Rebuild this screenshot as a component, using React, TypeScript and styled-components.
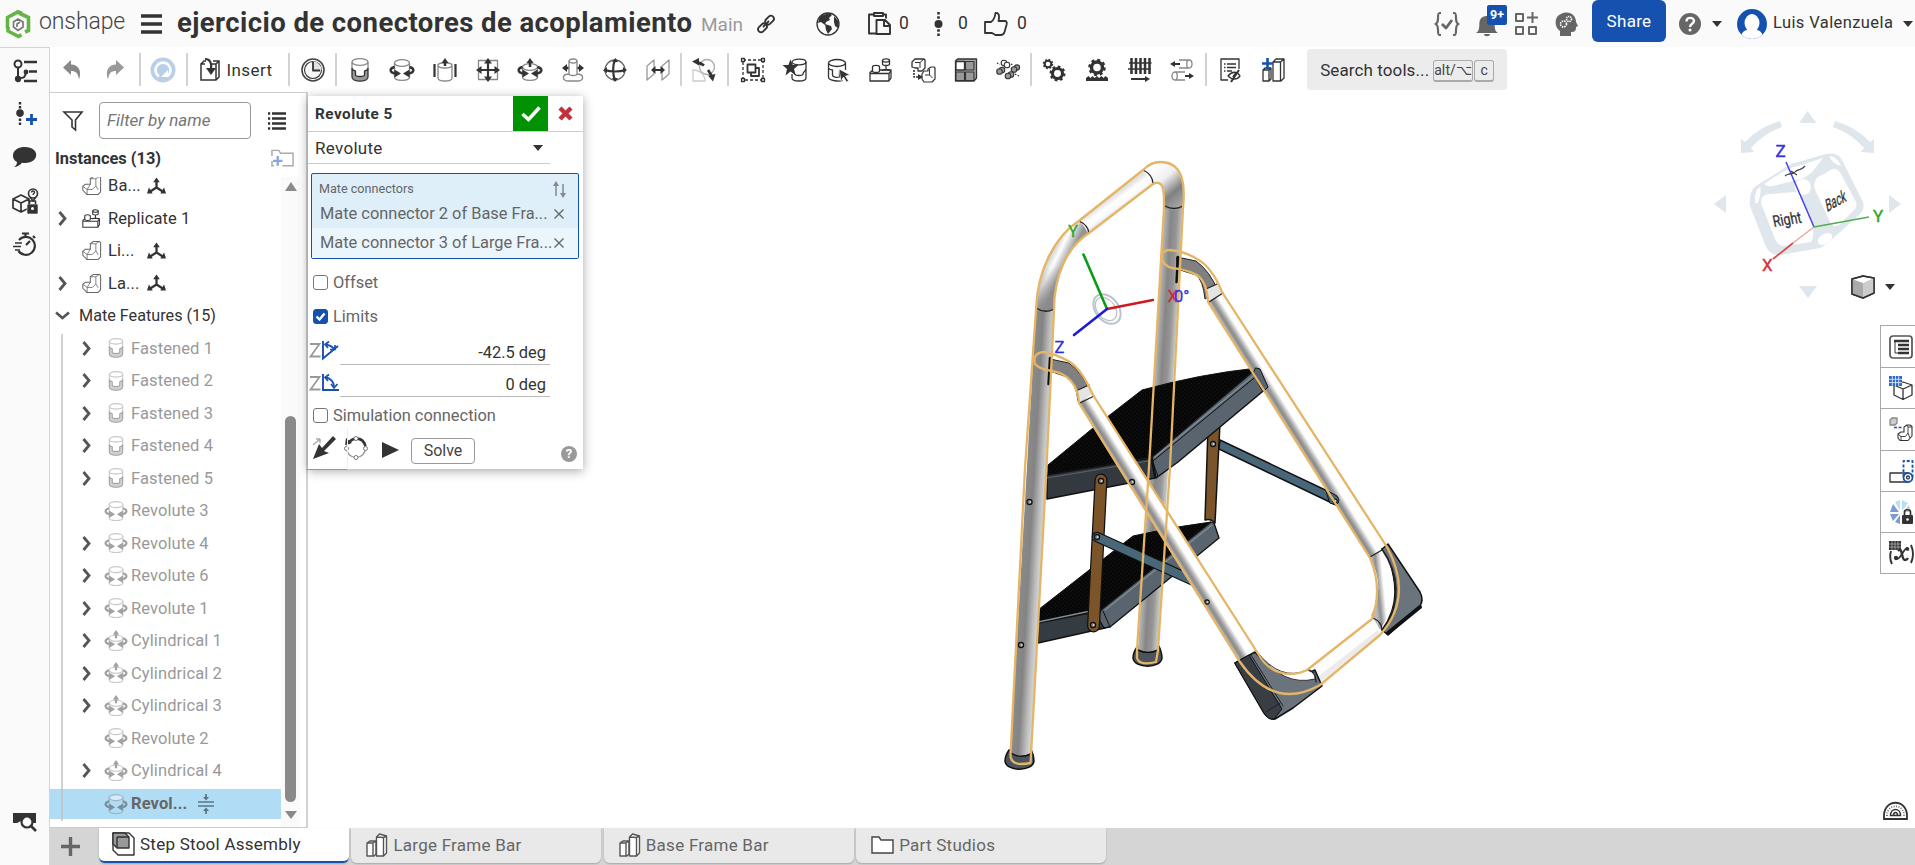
import React from 'react';
import styled, { createGlobalStyle } from 'styled-components';

const Global = createGlobalStyle`
  * { box-sizing: border-box; }
  body { margin: 0; overflow: hidden; background: #fff; color: #333; font: 16.5px Roboto, "Liberation Sans", sans-serif; }
  svg { display: block; flex: none; overflow: visible; }
`;

const Page = styled.div`
  width: 1915px; height: 865px; display: flex; flex-direction: column; background: #fff;
`;
const Header = styled.header`
  height: 47px; flex: none; display: flex; align-items: center; background: #fafafa; padding: 0 2px 0 5px;
`;
const Slot = styled.div<{ $ml?: number; $w?: number }>`
  flex: none; position: relative; display: flex; align-items: center; white-space: nowrap;
  margin-left: ${p => p.$ml ?? 0}px; width: ${p => (p.$w ? p.$w + 'px' : 'auto')};
`;
const Brand = styled.span`font: 300 23px Roboto, sans-serif; letter-spacing: -0.1px; color: #444; transform: translateY(-2px);`;
const Title = styled.h1`margin: 0; font: 700 27.5px Roboto, sans-serif; letter-spacing: 0.42px; color: #333; transform: translateY(-1px);`;
const Branch = styled.span`font-size: 19px; color: #999; transform: translateY(1px);`;
const Count = styled.span`font-size: 17.5px; transform: translateY(-1px);`;
const RightGroup = styled.div`margin-left: auto; display: flex; align-items: center; height: 47px;`;
const Badge = styled.span`
  position: absolute; left: 12px; top: -7px; width: 20px; height: 20px; border-radius: 2px; background: #1651b0;
  color: #fff; font: 700 12.5px/19px Roboto, sans-serif; text-align: center;
`;
const Share = styled.button`
  width: 74px; height: 42px; align-self: flex-start; margin: 0 0 0 14px; padding: 0 0 1px; border: 0; border-radius: 6px;
  background: #1651b0; color: #fff; font: 17px Roboto, sans-serif; letter-spacing: 0.3px;
`;
const UserName = styled.span`font-size: 16.5px; letter-spacing: 0.4px; transform: translateY(-1px);`;
const Body = styled.div`flex: 1; display: flex; min-height: 0;`;
const Rail = styled.nav`
  width: 50px; flex: none; background: #fafafa; border-right: 1px solid #d5d5d5; border-top: 1px solid #d5d5d5;
  display: flex; flex-direction: column; align-items: center;
`;
const RailItem = styled.div<{ $h: number; $mt?: number }>`
  height: ${p => p.$h}px; margin-top: ${p => p.$mt ?? 0}px; display: flex; align-items: center; justify-content: center;
`;
const Work = styled.div`flex: 1; display: flex; flex-direction: column; min-width: 0;`;
const Toolbar = styled.div`height: 45px; flex: none; display: flex; align-items: center;`;
const Tool = styled.div<{ $w?: number }>`
  width: ${p => p.$w ?? 42.6}px; height: 45px; flex: none; display: flex; align-items: center; justify-content: center;
`;
const InsertTool = styled(Tool)`justify-content: flex-start; padding-left: 11px; gap: 7px; font-size: 17px; letter-spacing: 0.4px;`;
const Sep = styled.div<{ $w: number }>`
  width: ${p => p.$w}px; flex: none; display: flex; justify-content: center;
  &::before { content: ''; width: 2px; height: 33px; background: #d2d2d2; }
`;
const SearchBox = styled.div`
  width: 200px; height: 41px; margin: 0 0 0 13px; padding: 0 12px 0 13px; border-radius: 4px; background: #ececec;
  display: flex; align-items: center; font-size: 17px; white-space: nowrap; letter-spacing: 0.1px;
`;
const Key = styled.kbd<{ $w: number }>`
  width: ${p => p.$w}px; height: 22px; margin-right: 1px; border: 1px solid #aaa; border-bottom-width: 2px; border-radius: 3px;
  font: 14px/18px Roboto, "DejaVu Sans", sans-serif; text-align: center; color: #444;
`;
const KeyGroup = styled.div`margin-left: auto; display: flex; padding-top: 2px;`;
const Middle = styled.div`flex: 1; display: flex; position: relative; min-height: 0;`;
const Panel = styled.aside`
  width: 258px; flex: none; border-top: 1px solid #ccc; border-right: 2px solid #d2d2d2; border-bottom: 1px solid #ccc;
  display: flex; flex-direction: column;
`;
const FilterRow = styled.div`display: flex; align-items: center; height: 37px; margin-top: 9px; padding: 0 20px 0 13px;`;
const FilterInput = styled.div`
  width: 152px; height: 37px; margin: 0 auto 0 16px; border: 1px solid #999; border-radius: 4px; padding-left: 7px;
  font: italic 17px/35px Roboto, sans-serif; color: #757575;
`;
const ListHead = styled.div`
  height: 38px; display: flex; align-items: center; justify-content: space-between; padding: 0 12px 0 5px;
  font-weight: 700; font-size: 16.4px;
`;
const TreeArea = styled.div`flex: 1; display: flex; min-height: 0;`;
const Tree = styled.div`width: 231px; overflow: hidden;`;
const TreeRows = styled.div`
  margin-top: -8px; padding-top: 0.5px; position: relative; letter-spacing: 0.1px;
`;
const TreeLine = styled.div`position: absolute; left: 11px; top: 165px; width: 2px; height: 487px; background: #d2d2d2;`;
const Row = styled.div<{ $level: number; $muted?: boolean; $sel?: boolean }>`
  height: 32.5px; display: flex; align-items: center; white-space: nowrap; position: relative;
  padding-left: ${p => (p.$level === 0 ? 5 : p.$level === 1 ? 8 : 32)}px;
  color: ${p => (p.$muted ? '#999' : '#333')};
  ${p => p.$level === 0 && 'font-size: 16.2px; letter-spacing: 0;'}
  ${p => p.$sel && `
    color: #666; font-weight: 700; height: 30px; margin-top: 1.5px;
    background: linear-gradient(90deg, transparent 11px, #bcc8ce 11px, #bcc8ce 13px, transparent 13px) #b1dcf5;
  `}
`;
const ChevronBox = styled.span`width: 24px; display: flex;`;
const IconBox = styled.span<{ $w: number; $muted?: boolean }>`
  width: ${p => p.$w}px; display: flex; opacity: ${p => (p.$muted ? 0.45 : 1)};
`;
const ScrollTrack = styled.div`width: 19px; background: #fafafa; display: flex; flex-direction: column; align-items: center; padding: 5px 0;`;
const Thumb = styled.div`width: 11px; height: 386px; margin-top: 225px; margin-bottom: 9px; border-radius: 6px; background: #8a8a8a;`;
const Tri = styled.div<{ $down?: boolean; $color?: string; $s?: number }>`
  width: 0; height: 0; border: ${p => p.$s ?? 6}px solid transparent;
  ${p => p.$down
    ? `border-top: ${(p.$s ?? 6) * 1.35}px solid ${p.$color ?? '#8a8a8a'}; border-bottom: 0;`
    : `border-bottom: ${(p.$s ?? 6) * 1.5}px solid ${p.$color ?? '#8a8a8a'}; border-top: 0;`}
`;
const Canvas = styled.main`flex: 1; position: relative;`;
const Scene = styled.svg`position: absolute; left: 0; top: 0; font-family: Roboto, sans-serif;`;
const SidePanel = styled.div`
  position: absolute; right: 0; top: 233px; width: 35px; border: 1px solid #a8a8a8; border-right: 0; background: #fff;
`;
const SideItem = styled.div`
  height: 41.2px; display: flex; align-items: center; padding-left: 8px;
  & + & { border-top: 1px solid #a8a8a8; }
`;
const ViewMenu = styled.div`position: absolute; right: 20px; top: 183px; display: flex; align-items: center; gap: 10px;`;
const Protractor = styled.div`position: absolute; right: 7px; top: 710px;`;

const Dialog = styled.section`
  position: absolute; left: 258px; top: 4px; width: 275px; height: 373px; background: #fff; box-shadow: 0 2px 10px rgba(0,0,0,0.35);
  color: #666; display: flex; flex-direction: column;
`;
const DialogHead = styled.div`
  height: 36px; flex: none; border-bottom: 1px solid #ccc; display: flex; align-items: center; padding-left: 7px;
  font-weight: 700; font-size: 15.3px; letter-spacing: 0.5px; color: #333;
`;
const Accept = styled.div`width: 35px; height: 35px; margin-left: auto; background: #009203; display: flex; align-items: center; justify-content: center;`;
const Cancel = styled.div`width: 35px; display: flex; justify-content: center;`;
const SelectRow = styled.div`
  width: 242px; height: 32px; flex: none; border-bottom: 1px solid #ccc; display: flex; align-items: center; justify-content: space-between;
  padding: 0 7px; font-size: 17px; letter-spacing: 0.3px; color: #333;
`;
const Selection = styled.div`
  margin: 9px 0 0 3px; width: 268px; height: 86px; flex: none; border: 1px solid #1651b0; border-radius: 2px; background: #deeff9;
`;
const SelLabel = styled.div`height: 26px; padding: 7px 12px 0 7px; font-size: 12.6px; display: flex; justify-content: space-between;`;
const SelItem = styled.div<{ $light?: boolean }>`
  height: ${p => (p.$light ? 30 : 28)}px; padding: 0 14px 1px 8px; display: flex; align-items: center; justify-content: space-between;
  font-size: 16.4px; white-space: nowrap; background: ${p => (p.$light ? '#ebf5fc' : 'transparent')};
`;
const CheckRow = styled.div<{ $mt: number }>`
  height: 18px; margin-top: ${p => p.$mt}px; padding-left: 5px; display: flex; align-items: center; gap: 5px; font-size: 16.4px;
`;
const Check = styled.span<{ $on?: boolean }>`
  width: 15px; height: 15px; border-radius: 3px; border: 1px solid ${p => (p.$on ? '#1651b0' : '#777')};
  background: ${p => (p.$on ? '#1651b0' : '#fff')}; display: flex; align-items: center; justify-content: center;
`;
const ValueRow = styled.div<{ $h: number }>`height: ${p => p.$h}px; display: flex; width: 242px;`;
const Value = styled.div`
  margin-left: auto; width: 210px; border-bottom: 1px solid #bbb; display: flex; align-items: flex-end; justify-content: flex-end;
  padding: 0 4px 2px; color: #333; font-size: 16.4px;
`;
const ValueIcon = styled.div<{ $pt: number }>`padding: ${p => p.$pt}px 0 0 1px;`;
const DialogFoot = styled.div`
  flex: 1; display: flex; align-items: center; padding: 4px 6px 0 5px; margin-top: 4px;
`;
const FootIcon = styled.div<{ $ml?: number; $up?: number }>`margin-left: ${p => p.$ml ?? 0}px; padding-bottom: ${p => p.$up ?? 0}px;`;
const Solve = styled.button`
  width: 64px; height: 26px; margin-left: 12px; border: 1px solid #999; border-radius: 4px; background: #fff; color: #444;
  font: 16px/20px Roboto, sans-serif; padding: 0;
`;
const HelpDot = styled.div`
  width: 16px; height: 16px; margin: 6px 0 0 auto; border-radius: 50%; background: #999; color: #fff; font: 700 13px/16px Roboto, sans-serif;
  text-align: center;
`;
const GhostCorner = styled.div`
  position: absolute; left: -2px; top: 332px; width: 42px; height: 42px; border-bottom: 1px solid #999; border-right: 1px solid #eee;
`;

const TabBar = styled.footer`height: 37px; flex: none; display: flex; background: #d5d5d5; margin-left: -1px;`;
const AddTab = styled.div`width: 50px; display: flex; align-items: center; justify-content: center; padding-right: 7px;`;
const Tab = styled.div<{ $active?: boolean; $gap: number }>`
  width: 250px; height: 35px; margin-right: 2.4px; padding: 0 0 1px ${p => (p.$active ? 13 : 15)}px;
  display: flex; align-items: center; gap: ${p => p.$gap}px; border-radius: 0 0 6px 6px; white-space: nowrap;
  background: ${p => (p.$active ? '#fff' : '#e9e9e9')}; color: ${p => (p.$active ? '#333' : '#666')};
  border-bottom: ${p => (p.$active ? '2px solid #1651b0' : '0')}; box-shadow: 0 1px 2px rgba(0,0,0,0.22);
  font-size: 17px; letter-spacing: 0.25px;
`;

const D = '#333';

const Icon = ({ s = 24, children, w }: { s?: number; w?: number; children: React.ReactNode }) => (
  <svg width={w ?? s} height={s} viewBox={`0 0 ${w ?? 24} 24`} fill="none" stroke={D} strokeWidth="1.3" strokeLinejoin="round">{children}</svg>
);

const Can = ({ top = 4, bottom = 19 }: { top?: number; bottom?: number }) => (
  <g stroke="#888"><ellipse cx="12" cy={top} rx="7.500" ry="3.300" fill="#fff" /><path d={`M4.500 ${top}V${bottom}c0 4.500 15 4.500 15 0V${top}`} /></g>
);
const TurnArrows = () => (
  <g><path d="M4.500 9C-1 10.500-.5 14.500 5 15.500M19.500 9c5.500 1.500 5 5.500-.5 6.500" strokeWidth="2.400" />
    <path d="M4.500 11.500l6.500 4-6.500 4zM19.500 11.500l-6.500 4 6.500 4z" fill={D} stroke="none" /></g>
);
const FastenedIcon = ({ s = 24 }: { s?: number }) => (
  <Icon s={s}><ellipse cx="12" cy="4" rx="8" ry="3.300" stroke="#888" /><path d="M4 4v7M20 4v7" stroke="#888" />
    <path d="M4 10.500V19c0 5.500 16 5.500 16 0v-8.500c-1 1.800-2.500 2.500-3.500 2.500v4c0 2-9 2-9 0v-4c-1 0-2.500-.7-3.500-2.500z" fill="#999" /></Icon>
);
const RevoluteIcon = ({ s = 24 }: { s?: number }) => <Icon s={s}><Can top={5} /><TurnArrows /></Icon>;
const CylIcon = ({ s = 24 }: { s?: number }) => (
  <Icon s={s}><Can top={9} bottom={19} /><TurnArrows /><path d="M12 9V4" strokeWidth="2.500" /><path d="M8.500 5L12 0l3.500 5z" fill={D} stroke="none" /></Icon>
);
const PartIcon = ({ s = 24 }: { s?: number }) => (
  <Icon s={s}><g stroke="#666"><path d="M1 13l3-2.500h6.500V3.500l4-3h7.500l1.500 1.500v18L20 23.500H6.500L1 18z" fill="#fff" /><path d="M1 13l5.500 4v6M6.500 17H13l4.500-4.500V3.500L22 .5M10.500 3.500h7M10.500 10.500l-4 6.500M17.500 12.500l3 5" strokeWidth="1" /></g></Icon>
);
const ReplicateIcon = ({ s = 24 }: { s?: number }) => (
  <Icon s={s}><path d="M1 14.500l3-2.500h18v8l-2 3H1zM1 15.500h19v7M20 15.500l2-3" />
    <ellipse cx="7" cy="9" rx="3.500" ry="1.600" fill="#fff" /><path d="M3.500 9v4c0 2 7 2 7 0V9" fill="#fff" />
    <ellipse cx="17" cy="2.500" rx="3.500" ry="1.600" /><path d="M13.500 2.500v3.500c0 2 7 2 7 0V2.500M17 8v4M13.500 13c0-2 7-2 7 0" /></Icon>
);
const MateIcon = () => (
  <svg width="19" height="18" viewBox="0 0 20 18" fill={D}><path d="M10 3v8M10 10.500L3 15M10 10.500L17 15" stroke={D} strokeWidth="2.400" /><path d="M6.500 5L10 0l3.500 5zM0 17l2-6.500 4 6.500zM20 17l-2-6.500-4 6.500z" /></svg>
);
const PartStudio = ({ c = '#555' }: { c?: string }) => (
  <svg width="22" height="24" viewBox="0 0 22 24" fill="#fff" stroke={c} strokeWidth="1.400" strokeLinejoin="round">
    <path d="M1 10l3-2h6v13l-2 2H1zM1 10h6v13M7 10l3-2" /><path d="M10.500 4l3-3 7 2v17l-3 3h-7zM10.500 4l7 .5V23M17.500 4.500l3-1.500" /></svg>
);
const Chevron = ({ down }: { down?: boolean }) => down
  ? <svg width="15" height="9" viewBox="0 0 15 9" fill="none" stroke="#555" strokeWidth="2.600"><path d="M1 1.500L7.500 7 14 1.500" /></svg>
  : <svg width="9" height="15" viewBox="0 0 9 15" fill="none" stroke="#555" strokeWidth="2.800"><path d="M1.500 1l5.500 6.500L1.500 14" /></svg>;
const gear = (cx: number, cy: number, r: number) => (
  <g><circle cx={cx} cy={cy} r={r} fill="none" stroke={D} strokeWidth={r * 0.62} />
    <circle cx={cx} cy={cy} r={r * 1.35} fill="none" stroke={D} strokeWidth={r * 0.5} strokeDasharray={`${r * 0.53} ${r * 0.53}`} /></g>
);

const mateTools: React.ReactNode[] = [
  <FastenedIcon />,
  <RevoluteIcon />,
  <Icon><path d="M5 7v13c0 4 14 4 14 0V7c-1-3-13-3-14 0zM5 7c0 4 14 4 14 0" stroke="#888" /><path d="M12 8V4" strokeWidth="2.500" /><path d="M8.500 5L12 0l3.500 5z" fill={D} stroke="none" /><path d="M1.500 6v13M22.500 6v13" strokeWidth="2.200" /></Icon>,
  <Icon><path d="M2.500 2.500h19v19h-19z" stroke="#888" /><path d="M12 4v16M4 12h16" strokeWidth="2.200" /><path d="M8 5.500L12 0l4 5.500zM8 18.500l4 5.500 4-5.500zM5.500 8L0 12l5.500 4zM18.500 8l5.500 4-5.500 4z" fill={D} stroke="none" /></Icon>,
  <CylIcon />,
  <Icon><ellipse cx="12" cy="3" rx="4" ry="2" stroke="#888" /><path d="M8 3v13c0 2 8 2 8 0V3M8 16c-7 0-8 7 0 7h8c8 0 7-7 0-7" stroke="#888" /><path d="M5 10h2.500M19 10h-2.500" strokeWidth="2.500" /><path d="M6 6l-5 4 5 4zM18 6l5 4-5 4z" fill={D} stroke="none" /></Icon>,
  <Icon><circle cx="12" cy="12" r="10" stroke="#666" /><path d="M12 2c-2.500 5-2.500 15 0 20M2 12c5 2 15 2 20 0" strokeWidth="2.200" /><path d="M9 4l3.500-4L15 4zM9 20l3 4 3-4zM4 9l-4 3.500L4 15zM20 9l4 3-4 3z" fill={D} stroke="none" /></Icon>,
  <Icon><path d="M1 8l7-6v14l-7 6zM16 8l7-6v14l-7 6z" stroke="#999" /><path d="M8 12h8" strokeWidth="2" /><path d="M9.500 8L5 12l4.500 4zM14.500 8l4.500 4-4.500 4z" fill={D} stroke="none" /></Icon>,
];
const tangent = <Icon><circle cx="15" cy="9" r="7.500" stroke="#aaa" /><path d="M1 23V12c7 0 12 5 12 11z" stroke="#ccc" /><path d="M5 4.500c3 .3 5 1.500 7 3M16 12c2 2.500 3.500 5 4 8" strokeWidth="2.800" /><path d="M0 3.500L7 0v7.500zM16 17.500l7.500-1.500-2.500 7.500z" fill={D} stroke="none" /></Icon>;
const groupTools: React.ReactNode[] = [
  <Icon><path d="M2 2h20v20H2z" strokeDasharray="3 2" /><path d="M6.500 6.500h8v8h-8z" strokeWidth="1.800" /><path d="M14.500 10h3.500v8h-8v-3.500" strokeWidth="1.800" /><path d="M.5.500h3v3h-3zM20.500.5h3v3h-3zM.5 20.500h3v3h-3zM20.500 20.500h3v3h-3z" fill="#fff" /></Icon>,
  <Icon><ellipse cx="16" cy="4" rx="7" ry="2.800" /><path d="M23 4v6c0 4-3 3-3 6 0 2-8 2-8 0M23 10v10c0 4-14 4-14 0v-4" /><path d="M7.500 1.500l2.300 5.500h5.700l-4.500 4 1.800 6.500-5.300-4-5 4L4 11-.5 7h5.800z" fill={D} stroke="none" /></Icon>,
  <Icon><ellipse cx="11" cy="5" rx="8.500" ry="3.500" /><path d="M2.500 5v14c0 4 12 5 14 3M19.500 5v7M2.500 10c1 2 3 2 4 2v5c0 2 4 3 7 2v-6" /><path d="M13 11l11 6-4.500 1 3 5-2 1-3-5-2.500 4z" fill={D} stroke="#fff" strokeWidth=".6" /></Icon>,
  <ReplicateIcon />,
  <Icon><path d="M1 4l3-3h9l1 1v8l-3 3H7v-3H4L1 9z" /><path d="M4 4.500h5V10M9 4.500L13 1" strokeWidth="1" /><path d="M11 16l2-3h4v-2l3-2h3l1 1v11l-3 3h-8l-2-3z" strokeWidth="1.200" /><path d="M14 17h4.500v-6M18.500 17l3 3" strokeWidth="1" /><path d="M3 12v7h6" strokeDasharray="2 1" strokeWidth="1.600" /><path d="M7 16l5 3-5 3z" fill={D} stroke="none" /></Icon>,
  <Icon><path d="M1.500 3l2-2h19v19l-2.500 3H1.500z" fill="#aaa" /><path d="M2 3.500h8.500v8.500h-8.500z" fill="#fff" /><path d="M11.500 3.500h8.500v8.500h-8.500zM2 14h8.500v8.500h-8.500zM11.500 14h8.500v8.500h-8.500z" fill="#999" strokeWidth="1.100" /></Icon>,
  <Icon><g fill="#fff" strokeWidth="1.100"><circle cx="8" cy="5" r="2.800" /><circle cx="11" cy="7" r="2.800" /></g><g fill="#999" strokeWidth="1.100"><circle cx="6" cy="12" r="2.800" /><circle cx="3.500" cy="13.500" r="2.800" /><circle cx="21" cy="9.500" r="2.600" /><circle cx="18" cy="11.500" r="2.800" /><circle cx="15" cy="16.500" r="2.800" /><circle cx="12" cy="18" r="2.800" /></g><path d="M1 5l3 1.500M19 16l4 2M15 6l2 1" strokeDasharray="1.500 1.500" /></Icon>,
];
const relTools: React.ReactNode[] = [
  <Icon>{gear(6, 6, 3.300)}{gear(15.500, 15.500, 5)}</Icon>,
  <Icon>{gear(12, 9.500, 5.500)}<path d="M1 23v-3l2.500-2 2 2 2-2 2 2 2.500-2 2 2 2.500-2 2 2 2-2 2.500 2v3z" fill={D} stroke="none" /></Icon>,
  <Icon><path d="M3.500 0v16M8 0v16M12.500 0v16M17 0v16M21.500 0v16" strokeWidth="2.500" /><path d="M1 5h22.500M0 11h22.500" strokeWidth="1.700" /><path d="M3 21h16" strokeWidth="2" /><path d="M17 18l5 3-5 3z" fill={D} stroke="none" /></Icon>,
  <Icon><g stroke="#888"><path d="M9 2h10c4 0 4 8 0 8H9M19 2c-3 0-3 8 0 8M15 14H5c-4 0-4 8 0 8h10M5 14c3 0 3 8 0 8" /></g><path d="M4 6h6M15 18h6" strokeWidth="2" /><path d="M5 3L0 6l5 3zM19 15l5 3-5 3z" fill={D} stroke="none" /></Icon>,
];
const lastTools: React.ReactNode[] = [
  <Icon><path d="M10 22H3V1h18v10M6 6h1.500M9 6h9M6 9.500h1.500M9 9.500h9M6 13h1.500M9 13h5" /><path d="M10 18c4-5 9-5 12 0-3 4-8 4-12 0z" /><path d="M13 24l8-12M15 19l3-4" strokeWidth="2" /></Icon>,
  <Icon><path d="M2 12l2-2h6v11l-2 2H2zM2 12h6v11M8 12l2-2" /><path d="M12 4l3-3h8v19l-3 3h-8zM12 4h7.500v19M19.500 4L23 1" /><path d="M6.500 0v11M1 5.500h11" stroke="#1651b0" strokeWidth="2.600" /></Icon>,
];

const AngleIcon = ({ flat }: { flat?: boolean }) => (
  <svg width="30" height="19" viewBox="0 0 30 19" fill="none">
    <path d="M1 3h9.500L1.500 15.500h10" stroke="#999" strokeWidth="1.800" />
    <g stroke="#1651b0" strokeWidth="1.900">
      <path d={flat ? 'M14 0v16h16' : 'M14 0v17.500L29 5'} />
      <path d={flat ? 'M17 3.500c5 1 8 5 8 9' : 'M17 3.500c3 .5 6 2 8 4'} />
      <path d={flat ? 'M20 .5l-4 3 3 3.500M22 10l3 4 3.500-4' : 'M20 .5l-4 3 3 3.500M21 8.500h5V4'} strokeWidth="1.700" />
    </g>
  </svg>
);

type RowData = { t: string; k: 'f' | 'r' | 'c'; open?: boolean };
const features: RowData[] = [
  ...[1, 2, 3, 4, 5].map(n => ({ t: `Fastened ${n}`, k: 'f' as const, open: true })),
  { t: 'Revolute 3', k: 'r' },
  { t: 'Revolute 4', k: 'r', open: true },
  { t: 'Revolute 6', k: 'r', open: true },
  { t: 'Revolute 1', k: 'r', open: true },
  { t: 'Cylindrical 1', k: 'c', open: true },
  { t: 'Cylindrical 2', k: 'c', open: true },
  { t: 'Cylindrical 3', k: 'c', open: true },
  { t: 'Revolute 2', k: 'r' },
  { t: 'Cylindrical 4', k: 'c', open: true },
];
const kindIcon = { f: <FastenedIcon s={20} />, r: <RevoluteIcon s={22} />, c: <CylIcon s={22} /> };

const bolt = (x: number, y: number, r = 2.600) => <g><circle cx={x} cy={y} r={r} fill="#777" stroke="#111" strokeWidth="1.200" /><circle cx={x + 0.600} cy={y} r={0.900} fill="#ddd" /></g>;

/* Step stool model, drawn in window coordinates through the viewBox. */
const Stool = () => (
  <g strokeLinejoin="round" strokeLinecap="round">
    <defs>
      <linearGradient id="leg" gradientUnits="userSpaceOnUse" x1="1025" y1="468" x2="1046" y2="469.200"><stop offset="0" stopColor="#8c8c8c" /><stop offset=".45" stopColor="#848484" /><stop offset=".8" stopColor="#bdbdbd" /><stop offset="1" stopColor="#d5d5d5" /></linearGradient>
      <linearGradient id="rearLeg" gradientUnits="userSpaceOnUse" x1="1150" y1="467" x2="1170" y2="468.200"><stop offset="0" stopColor="#b0b0b0" /><stop offset=".3" stopColor="#868686" /><stop offset=".6" stopColor="#959595" /><stop offset="1" stopColor="#dcdcdc" /></linearGradient>
      <linearGradient id="tube" gradientUnits="userSpaceOnUse" x1="1163" y1="538" x2="1179" y2="528"><stop offset="0" stopColor="#bbb" /><stop offset=".16" stopColor="#8a8a8a" /><stop offset=".28" stopColor="#a0a0a0" /><stop offset=".55" stopColor="#fff" /><stop offset="1" stopColor="#fff" /></linearGradient>
      <linearGradient id="tubeR" gradientUnits="userSpaceOnUse" x1="1289" y1="430" x2="1305" y2="420"><stop offset="0" stopColor="#bbb" /><stop offset=".16" stopColor="#8a8a8a" /><stop offset=".28" stopColor="#a0a0a0" /><stop offset=".55" stopColor="#fff" /><stop offset="1" stopColor="#fff" /></linearGradient>
      <linearGradient id="bendLow" gradientUnits="userSpaceOnUse" x1="1374" y1="588" x2="1394" y2="586"><stop offset="0" stopColor="#bbb" /><stop offset=".2" stopColor="#8f8f8f" /><stop offset=".5" stopColor="#fff" /><stop offset="1" stopColor="#fff" /></linearGradient>
      <linearGradient id="bar" gradientUnits="userSpaceOnUse" x1="1112" y1="197" x2="1123" y2="212"><stop offset="0" stopColor="#e2e2e2" /><stop offset=".3" stopColor="#fff" /><stop offset=".6" stopColor="#fafafa" /><stop offset="1" stopColor="#bbb" /></linearGradient>
      <linearGradient id="bendL" gradientUnits="userSpaceOnUse" x1="1042" y1="262" x2="1062" y2="272"><stop offset="0" stopColor="#b0b0b0" /><stop offset=".5" stopColor="#fff" /><stop offset="1" stopColor="#959595" /></linearGradient>
      <linearGradient id="bendFade" x1="0" y1="0" x2="0" y2="1"><stop offset=".5" stopColor="#888" stopOpacity="0" /><stop offset="1" stopColor="#888" stopOpacity=".9" /></linearGradient>
      <linearGradient id="bendR" gradientUnits="userSpaceOnUse" x1="1150" y1="170" x2="1180" y2="205"><stop offset="0" stopColor="#fff" /><stop offset=".35" stopColor="#eee" /><stop offset=".7" stopColor="#808080" /><stop offset="1" stopColor="#a5a5a5" /></linearGradient>
      <pattern id="dots" width="4" height="4" patternUnits="userSpaceOnUse"><rect width="4" height="4" fill="#070707" /><rect x="1" y="1" width="1" height="1" fill="#161616" /><rect x="3" y="3" width="1" height="1" fill="#161616" /></pattern>
    </defs>

    {/* rear leg */}
    <path d="M1137 647q-4 6-4 11c1 11 28 11 29 0q0-5-3-12z" fill="#4b545c" stroke="#111" strokeWidth="1.500" />
    <path d="M1164 208L1138 649c3 4 16 4 20 0L1183 208z" fill="url(#rearLeg)" />
    <path d="M1138 650q10 5 20 0" fill="none" stroke="#111" strokeWidth="1.500" />

    {/* lower step and braces */}
    <path d="M1038 610L1093 567l40-31q38-9 78-14l-110 88-63 14z" fill="url(#dots)" stroke="#111" />
    <path d="M1038 623l62-12 5 17-67 15z" fill="#343b41" stroke="#111" strokeWidth="1.500" />
    <path d="M1101 610l110-88 3 1 5 15-109 89-6 1-6-10z" fill="#59646e" stroke="#111" strokeWidth="1.300" />
    <path d="M1038 622l62-13M1105 610l107-85" stroke="#7f8b96" strokeWidth="1.400" /><path d="M1103 611l7 16" stroke="#111" />
    <path d="M1208 427L1205 520q6-2 10 3L1220 423z" fill="#7b5529" stroke="#111" strokeWidth="1.500" />
    <path d="M1220 440l118 56q4 6-2 9L1219 449z" fill="#486879" stroke="#111" strokeWidth="1.500" />
    {bolt(1213, 444)}

    {/* upper step */}
    <path d="M1048 465L1093 428 1142 390q58-16 115-22l-105 89-105 18z" fill="url(#dots)" stroke="#111" />
    <path d="M1047 475l104-17 4 20-108 21z" fill="#33393f" stroke="#111" strokeWidth="1.500" />
    <path d="M1047 478l102-17" stroke="#59646e" strokeWidth="1" />
    <path d="M1152 457l105-89 3 2 8 17-90 75-22 16z" fill="#59646e" stroke="#111" strokeWidth="1.500" />
    <path d="M1153 461l106-87" stroke="#111" /><path d="M1155 457l104-86" stroke="#7f8b96" strokeWidth="1.500" /><path d="M1152 460l6 16" stroke="#111" />

    <path d="M1101 480L1093.500 626" stroke="#111" strokeWidth="13" /><path d="M1101 480L1093.500 626" stroke="#7b5529" strokeWidth="10.500" />
    <path d="M1097 537L1196 582" stroke="#111" strokeWidth="10.500" /><path d="M1097 537L1198 583" stroke="#486879" strokeWidth="8" />
    {bolt(1101, 481)}{bolt(1097, 537)}{bolt(1093, 625)}

    {/* front leg and top hoop of the base frame */}
    <path d="M1009 750q-4 6-4 11c1 11 28 11 29 0q0-6-3-12z" fill="#4b545c" stroke="#111" strokeWidth="1.500" />
    <path d="M1036 310L1010.500 753q10 6 20 0L1046.500 468 1054 310z" fill="url(#leg)" />
    <path d="M1011 753q9 6 20 1" fill="none" stroke="#111" strokeWidth="1.500" />
    <path d="M1036 310C1037 270 1055 236 1080 220l9 13C1067 247 1054 276 1054 310q-9 4-18 0z" fill="url(#bendL)" />
    <path d="M1036 310C1037 270 1055 236 1080 220l9 13C1067 247 1054 276 1054 310q-9 4-18 0z" fill="url(#bendFade)" />
    <path d="M1080 220l63-50 10 14-65 49z" fill="url(#bar)" />
    <path d="M1143 170c18-16 42-4 41 24l-1 14q-9 4-19 0c0-12 1-27-11-24z" fill="url(#bendR)" />
    <g fill="none" stroke="#222" strokeWidth="1.300"><path d="M1036 308q9 6 18 1M1079 221q9 4 10 12M1143 170q9 4 10 13M1165 206q9 5 18 0" /></g>
    {bolt(1029.500, 502)}{bolt(1021, 645)}

    {/* large frame */}
    <path d="M1050 359l19 4q14 10 22 30l-13 8q-2-19-11-24l-17-6z" fill="#808080" stroke="#222" />
    <path d="M1177 257l19 4q14 10 22 30l-13 8q-2-19-9-24l-19-6z" fill="#808080" stroke="#222" />
    <path d="M1078 390l11-5 5 10-15 9z" fill="#e4e4e4" /><path d="M1206 289l11-5 5 10-14 9z" fill="#e4e4e4" />
    <path d="M1050 358l-1.500 26M1178 257l-1.500 25" stroke="#111" strokeWidth="2.500" />
    <path d="M1208 302l14-9 165 254-17 11z" fill="url(#tubeR)" />
    <path d="M1256 368l4 1 8 18-5 5-10-18z" fill="#59646e" stroke="#111" />
    <path d="M1326 490l11 6q4 5-1 9l-6-2z" fill="#486879" stroke="#111" />
    <path d="M1382 549l6-5 32 48q4 8 0 14l-32 29-6-5q26-36 0-81z" fill="#6b747d" stroke="#111" strokeWidth="1.500" />
    <path d="M1388 633l32-26" stroke="#111" strokeWidth="4" />
    <path d="M1370 557l13-8c13 24 14 50 4 69l-7 12-9-15q15-28-1-58z" fill="url(#bendLow)" />
    <path d="M1382 549q26 38 3 80" fill="none" stroke="#222" strokeWidth="1.800" />
    <path d="M1078 403l15-9 164 258-17 12z" fill="url(#tube)" />
    <path d="M1302 671l71-54 9 17-61 49z" fill="#fdfdfd" /><path d="M1318 684l62-50-2-4-63 49z" fill="#ebebeb" />
    <path d="M1235 663l20-11q28 34 60 18l7 16-29 22-18 11q-6 1-11-6z" fill="#6b747d" stroke="#111" strokeWidth="1.500" />
    <path d="M1235 663l14-8 33 54-8 10q-6 1-10-6z" fill="#383e43" stroke="#111" />
    <path d="M1251 655l32 51M1266 712l14-9" stroke="#222" />
    <path d="M1257 652q24 30 50 18l8 3v6q-32 8-58-27z" fill="#fff" stroke="#333" strokeWidth="1" />
    <g fill="none" stroke="#222" strokeWidth="1.300">
      <path d="M1370 557l12-7M1373 618q9 4 9 12M1308 669q8 4 8 13M1078 390l11-5M1080 403l14-7M1206 289l11-5M1209 302l14-9" />
    </g>
    {bolt(1132, 482)}{bolt(1207, 602, 2.200)}{bolt(1335, 501, 2)}

    {/* selection outline */}
    <g fill="none" stroke="#e5b566" strokeWidth="2.300">
      <path d="M1010.500 755q0 12 20 8l.5-8L1046.500 468 1054 310C1054 276 1067 247 1089 233L1153 184c12-5 11 9 11 24L1149 467 1137 650v8q2 8 19 4l2-12L1170 467 1183 208C1186 180 1181 162 1160 162q-9 0-17 8L1080 220C1055 236 1037 270 1036 310L1025 468z" />
      <path d="M1052 371q-13-2-17-7-3-11 9-12 12 2 26 10 12 8 23 33L1257 652q12 22 33 22 9 0 17-4L1372 619q11-31-2-61L1208 302q-1-20-11-27-8-4-17-6-14 0-18-9-2-10 8-10 14 1 27 9 15 8 25 33L1387 547q27 50-7 88L1320 685q-46 26-80-23L1079 403q-1-14-8-22-7-8-19-10z" />
    </g>

    {/* mate triad */}
    <g fill="none" stroke="#b9c3cb" strokeWidth="2"><ellipse cx="1107" cy="309" rx="11.500" ry="16.500" transform="rotate(-38 1107 309)" /><ellipse cx="1106" cy="309" rx="9" ry="13" strokeWidth="1.300" transform="rotate(-38 1106 309)" /></g>
    <path d="M1107 309L1083.500 254.500" stroke="#0a9c14" strokeWidth="2.600" /><path d="M1107 309l46-9" stroke="#cf1820" strokeWidth="2.600" /><path d="M1107 309l-33 26" stroke="#1b1bd2" strokeWidth="2.600" />
    <g fontSize="16.500" strokeWidth=".3"><text x="1068" y="237" fill="#25a82b" stroke="#25a82b">Y</text><text x="1167.500" y="302" fill="#d62630" stroke="#d62630">X</text><text x="1174" y="301.500" fill="#3232e0" stroke="#3232e0">0°</text><text x="1054.500" y="353" fill="#2c2ce0" stroke="#2c2ce0">Z</text></g>
  </g>
);

const ViewCube = () => (
  <g fill="#dfe6ec">
    <path d="M1799 123l8.500-12 9 12zM1799 286h18l-9 12zM1726 195v18l-12-9zM1889 195v18l12-9z" />
    <path d="M1780 121l2 6q-19 7-31 21l3 4-13 1v-14l4 3q14-15 35-21zM1835 121l-2 6q19 7 31 21l-3 4 13 1v-14l-4 3q-14-15-35-21z" />
    <path d="M1751 193q2-6 8-9l32-20 35-10q10-2 15 4l22 44q2 8-4 13l-31 28-8 5-40 7q-9 1-14-8l-16-41q-1-7 1-13z" />
    <g fill="#fff">
      <path d="M1762 198q2-4 8-4l25-2q4 0 6 4l12 31q1 12-2 15l-26 4q-7 0-10-7l-14-36q0-3 1-5z" />
      <path d="M1814 184q2-8 10-10l8-5q6-1 9 5l15 28q2 5-3 9l-14 14q-6 3-9-3l-14-30q-2-4-2-8z" />
      <path d="M1764 184q22-16 34-18l25-8-10 13q-6 6-12 8l-28 7q-6 1-9-2z" />
      <ellipse cx="1803" cy="187" rx="8" ry="8" /><ellipse cx="1825" cy="239" rx="8" ry="5" transform="rotate(-32 1825 239)" />
      <path d="M1755 203q-1-12 5-16 2 4-2 16zM1829 156q8 0 12 10-8-2-12-10z" />
    </g>
    <path d="M1814 227l-28-65" stroke="#4343ea" strokeWidth="1.500" /><path d="M1814 227l55-10" stroke="#4fae50" strokeWidth="1.500" /><path d="M1814 227l-21 16" stroke="#f0a0a0" strokeWidth="1.400" /><path d="M1793 243l-20 16" stroke="#e04444" strokeWidth="1.700" />
    <path d="M1785 176c4-4 7 0 10-4s5 0 10-6M1786 175l9-3M1791 171l6 4" stroke="#444" fill="none" strokeWidth="1.200" />
    <g fill="#333" stroke="#333" strokeWidth=".3" fontSize="15"><text transform="matrix(.82 -.13 .22 1.050 1774 227)">Right</text><text transform="matrix(.6 -.34 .22 1.100 1827 212)">Back</text></g>
    <g fontSize="17" strokeWidth=".4"><text x="1775.500" y="157" fill="#3434e0" stroke="#3434e0">Z</text><text x="1762" y="270.500" fill="#d63038" stroke="#d63038">X</text><text x="1873" y="221.500" fill="#2aa532" stroke="#2aa532">Y</text></g>
  </g>
);

const sideIcons: React.ReactNode[] = [
  <Icon><rect x="1" y="1" width="22" height="22" rx="3" stroke="#555" strokeWidth="1.700" /><path d="M5 6h15M9 10h11M9 14h11M9 18h11" strokeWidth="2.400" /><path d="M6 6v12h3" strokeWidth="1" /></Icon>,
  <Icon><path d="M5 9l9-3 9 3v10l-9 4.500L5 19zM5 9l9 4 9-4M14 13v10" fill="#fff" /><path d="M0 0h13v10H0z" fill="#2c68c6" stroke="none" /><path d="M0 3.300h13M0 6.600h13M3.300 0v10M6.500 0v10M9.700 0v10" stroke="#d8e6fb" strokeWidth=".9" /></Icon>,
  <Icon><path d="M1 3l2-2h5v5L6 8H1z" fill="#ccc" stroke="#888" /><path d="M5 10.500h9" stroke="#1651b0" strokeDasharray="3 1.500" strokeWidth="1.600" /><path d="M9 17l3-2h3v-5l3-2h3l2 1.500V19l-4 4.500h-8L9 21z" strokeWidth="1.100" /><path d="M9 17l3 2.500h4.500l2.500-3.500v-6l-1-2M12 19.500v4M19 10h4M19 16l2 5" strokeWidth=".9" /></Icon>,
  <Icon><path d="M19 14H1v9h18" /><circle cx="19" cy="18.500" r="4.500" stroke="#1651b0" strokeWidth="1.800" fill="#fff" /><circle cx="19" cy="18.500" r="1.500" /><path d="M14.500 18V2h9v16" stroke="#1651b0" strokeWidth="1.800" strokeDasharray="3 1.800" /></Icon>,
  <Icon><path d="M11 11L6 2l5-2zM13 11V0l6 3z" fill="#b8e0f5" stroke="none" /><path d="M10 12L4 4 1 12zM10 14H1l3 7zM11 15l-5 7 5 2z" fill="#7b9bd3" stroke="none" /><path d="M14 12l6-7 2 7z" fill="#ccc" stroke="none" /><rect x="13" y="15" width="11" height="9" rx="1" fill={D} stroke="none" /><path d="M15.500 15v-3c0-3 6-3 6 0v3" strokeWidth="1.700" /><circle cx="18.500" cy="19.500" r="1.300" fill="#fff" stroke="none" /></Icon>,
  <Icon><path d="M2 10Q0 17 3 23M22 4q4 9 0 18" strokeWidth="1.900" /><path d="M0 0h12v9H0z" fill={D} stroke="none" /><path d="M0 3h12M0 6h12M3 0v9M6 0v9M9 0v9" stroke="#bbb" strokeWidth=".7" /><path d="M9 10c5-5 3 9 7 9 2 0 3-2 3-2" strokeWidth="2.400" /><path d="M19 7c-4-2-7 13-12 11" strokeWidth="1.800" /><circle cx="7" cy="17" r="1.500" fill={D} /><circle cx="18.500" cy="8" r="1.200" fill={D} /></Icon>,
];

const CloseX = () => <svg width="10" height="10" viewBox="0 0 10 10" stroke="#666" strokeWidth="1.400"><path d="M.5.500l9 9M9.500.5l-9 9" /></svg>;

export default function App() {
  return (
    <Page>
      <Global />
      <Header>
        <Slot $w={26}>
          <svg width="26" height="28" viewBox="0 0 26 28" fill="none" strokeWidth="3.600"><path d="M17 3.500L13 1.800 2.500 7.500v11" stroke="#64b446" /><path d="M14 3l9.500 4.500v13L20 22" stroke="#64b446" /><path d="M3 17v4l10.500 5.500 3-1.800" stroke="#64b446" /><path d="M8.500 17v-5l4.500-3 5 3v5l-5 3.500zM12 17v-3l3-2" stroke="#777" strokeWidth="1.700" /></svg>
        </Slot>
        <Slot $ml={8} $w={85}><Brand>onshape</Brand></Slot>
        <Slot $ml={17} $w={21}><svg width="21" height="20" viewBox="0 0 21 20"><path d="M0 2h21M0 10h21M0 18h21" stroke={D} strokeWidth="3.600" /></svg></Slot>
        <Slot $ml={15} $w={514}><Title>ejercicio de conectores de acoplamiento</Title></Slot>
        <Slot $ml={10} $w={43}><Branch>Main</Branch></Slot>
        <Slot $ml={13} $w={18}><svg width="18" height="18" viewBox="0 0 18 18" fill="none" stroke={D} strokeWidth="1.800"><rect x="7.500" y="2.200" width="10" height="6" rx="3" transform="rotate(-45 12.500 5.200)" /><rect x=".5" y="9.800" width="10" height="6" rx="3" transform="rotate(-45 5.500 12.800)" /><path d="M6 12l6-6" /></svg></Slot>
        <Slot $ml={41}><Icon><circle cx="12" cy="12" r="11" /><path d="M4 4l9-3 3 2-3 3 1 2-4 2-1 3-4-3-3 1zM9 12l6 2 1 3-4 5-2-4zM18 4l5 6-1 6-3-2-1-4z" fill={D} stroke="none" /></Icon></Slot>
        <Slot $ml={27}><Icon><path d="M7 2.500H2v19h7M16 2.500h3v4M7 1h9v3H7z" strokeWidth="1.900" /><path d="M9.500 8H18l5 5v9H9.500zM17 8v6h6" strokeWidth="1.900" /></Icon></Slot>
        <Slot $ml={8} $w={10}><Count>0</Count></Slot>
        <Slot $ml={21} $w={17}><svg width="17" height="24" viewBox="0 0 17 24"><circle cx="8.500" cy="12" r="4" fill={D} /><path d="M8.500 0v24" stroke={D} strokeWidth="2.600" strokeDasharray="2.500 1.800" /></svg></Slot>
        <Slot $ml={11} $w={10}><Count>0</Count></Slot>
        <Slot $ml={16}><Icon><path d="M1 10h6c3-2 4-5 4.500-9 4-.5 4 4 3 8H21c2 0 2 2 1.500 4l-2 7c-.5 2-1.500 3-4 3h-5L8 21H1z" strokeWidth="1.800" /></Icon></Slot>
        <Slot $ml={9}><Count>0</Count></Slot>
        <RightGroup>
          <Slot><Icon><path d="M6 1H4.500C3 1 3 3 3 6s0 5-2.500 6C3 13 3 15 3 18s0 5 1.500 5H6M18 1h1.500C21 1 21 3 21 6s0 5 2.500 6C21 13 21 15 21 18s0 5-1.500 5H18" stroke="#666" strokeWidth="2.200" /><path d="M7 12l4 4 6-8" stroke="#666" strokeWidth="2.800" /></Icon></Slot>
          <Slot $ml={16}><Icon><path d="M1 21c4-2 3-7 3.500-11 .5-4 3.500-6 7.500-6s7 2 7.500 6c.5 4-.5 9 3.500 11zM9 22h6c0 3-6 3-6 0z" fill="#666" stroke="none" /></Icon><Badge>9+</Badge></Slot>
          <Slot $ml={15}><Icon><path d="M2 2h7v7H2zM2 15h7v7H2zM15 15h7v7h-7zM18.500 0v11M13 5.500h11" stroke="#666" strokeWidth="2" /></Icon></Slot>
          <Slot $ml={16}><Icon><path d="M6 24v-5C0 15 0 4 7 2c8-4 15 1 15 8l2 4-2 1c0 4-1 5-5 5v4z" fill="#666" stroke="none" /><g stroke="#fff" strokeWidth="1.600"><circle cx="9.500" cy="12" r="3" strokeDasharray="1.500 .9" /><circle cx="15" cy="7" r="2.500" strokeDasharray="1.300 .8" /></g></Icon></Slot>
          <Share>Share</Share>
          <Slot $ml={13}><svg width="22" height="22" viewBox="0 0 22 22"><circle cx="11" cy="11" r="11" fill="#666" /><path d="M7.500 8.500c0-5 7.500-4.500 7.500-.5 0 3-4 2.500-4 6" stroke="#fff" strokeWidth="2.400" fill="none" /><circle cx="11" cy="17" r="1.500" fill="#fff" /></svg></Slot>
          <Slot $ml={11}><Tri $down $color="#333" $s={5} /></Slot>
          <Slot $ml={15}><svg width="30" height="30" viewBox="0 0 30 30"><clipPath id="av"><circle cx="15" cy="15" r="15" /></clipPath><g clipPath="url(#av)"><path d="M0 0h30v30H0z" fill="#1651b0" /><ellipse cx="15" cy="14" rx="7.500" ry="9" fill="#fff" /><path d="M4 30c0-9 5-9 11-10 6 1 11 1 11 10z" fill="#fff" /></g></svg></Slot>
          <Slot $ml={6} $w={121}><UserName>Luis Valenzuela</UserName></Slot>
          <Slot $ml={9}><Tri $down $color="#333" $s={5} /></Slot>
        </RightGroup>
      </Header>
      <Body>
        <Rail>
          <RailItem $h={45}><Icon><circle cx="5" cy="5" r="3.500" strokeWidth="2" /><path d="M5 8.500V19c6 0 7 0 8-6" strokeWidth="2" /><circle cx="5" cy="20" r="2.500" fill={D} /><circle cx="13" cy="13" r="1.800" fill={D} /><path d="M11 3h13M16 12.500h8M11 22h13" strokeWidth="2.600" /></Icon></RailItem>
          <RailItem $h={42}><Icon><path d="M7 0v24" strokeWidth="2.400" strokeDasharray="2.500 1.600" /><circle cx="7" cy="11" r="3.800" fill={D} stroke="none" /><path d="M18.500 12v11M13 17.500h11" stroke="#1651b0" strokeWidth="2.800" /></Icon></RailItem>
          <RailItem $h={43}><Icon><path d="M12 2c15 0 15 16 0 16-1 0-2 0-3-.3C7 20 4 22 1 22c2-1 3-3 3-5-7-4-5-15 8-15z" fill={D} stroke="none" /></Icon></RailItem>
          <RailItem $h={45}><Icon><path d="M0 10l8-4 8 4v9l-8 4-8-4zM0 10l8 4 8-4M8 14v9" strokeWidth="1.700" /><circle cx="20" cy="4.500" r="4.500" strokeWidth="1.600" fill="#fafafa" /><path d="M18.500 3.500c0-2 3-2 3 0 0 1-1.500 1-1.500 2.500M17 8l3 4 3-4" strokeWidth="1.400" /><rect x="14" y="15" width="11" height="10" rx="1" fill={D} stroke="#fafafa" strokeWidth=".6" /><path d="M16.500 15v-3h6v3" strokeWidth="1.600" /><circle cx="19.500" cy="19.500" r="1.500" fill="#fff" stroke="none" /></Icon></RailItem>
          <RailItem $h={42}><Icon><path d="M6 8a9 9 0 1 1-.5 11" strokeWidth="2.200" /><path d="M9 1.500h7M12.500 2v3M20 4l2 2M13 13l4-4" strokeWidth="2.200" /><path d="M2 11h7M0 14.500h8M2 18h5" strokeWidth="1.600" /></Icon></RailItem>
          <RailItem $h={28} $mt={541}><Icon><path d="M0 5h23v10h-3a7 7 0 0 0-12-2L4 15H0z" fill={D} stroke="none" /><circle cx="14" cy="14" r="5.500" strokeWidth="2.200" fill="#fafafa" /><path d="M18 18l5 5" strokeWidth="2.600" /></Icon></RailItem>
        </Rail>
        <Work>
          <Toolbar>
            <Tool $w={43}><svg width="18" height="20" viewBox="0 0 18 20" fill="#888"><path d="M0 7.500L8 0v4.500c8 0 11 7 8 15C15 13 13 11 8 11v4z" /></svg></Tool>
            <Tool $w={44.5}><svg width="18" height="20" viewBox="0 0 18 20" fill="#999"><path d="M18 7.500L10 0v4.500c-8 0-11 7-8 15C3 13 5 11 10 11v4z" /></svg></Tool>
            <Sep $w={4} />
            <Tool $w={43}><svg width="26" height="26" viewBox="0 0 26 26"><circle cx="13" cy="13" r="12.500" fill="#b9cee8" /><path d="M9 19.500a7.500 7.500 0 1 1 8 0" fill="none" stroke="#fff" strokeWidth="2.600" /><path d="M18 13v7h-7z" fill="#fff" /></svg></Tool>
            <Sep $w={4} />
            <InsertTool $w={97}><svg width="20" height="24" viewBox="0 0 20 24" fill="none" stroke={D} strokeWidth="1.500"><path d="M1 6l3-3h2M13 3h6v16l-3 3H1V6h4M12 6h4v16M16 6l3-3" /><path d="M5 1c5 0 7 4 6 10" strokeWidth="2.200" /><path d="M6 10h10l-5 7z" fill={D} stroke="none" /></svg>Insert</InsertTool>
            <Sep $w={6} />
            <Tool><Icon><circle cx="12" cy="12" r="11" stroke="#444" strokeWidth="1.600" /><circle cx="12" cy="12" r="8.500" fill="#f6f6f6" strokeWidth="1.100" /><path d="M12 3.500a8.500 8.500 0 0 1 8.500 8.500H12z" fill="#e2e2e2" stroke="none" /><path d="M12 4v8.500h7" strokeWidth="1.800" /></Icon></Tool>
            <Sep $w={4.5} />
            {mateTools.map((t, i) => <Tool key={i}>{t}</Tool>)}
            <Sep $w={3.5} />
            <Tool>{tangent}</Tool>
            <Sep $w={6} />
            {groupTools.map((t, i) => <Tool key={i}>{t}</Tool>)}
            <Sep $w={3.5} />
            {relTools.map((t, i) => <Tool key={i}>{t}</Tool>)}
            <Sep $w={5.5} />
            {lastTools.map((t, i) => <Tool key={i}>{t}</Tool>)}
            <SearchBox>Search tools...<KeyGroup><Key $w={40}>alt/⌥</Key><Key $w={20}>c</Key></KeyGroup></SearchBox>
          </Toolbar>
          <Middle>
            <Panel>
              <FilterRow>
                <svg width="20" height="20" viewBox="0 0 20 20" fill="none" stroke={D} strokeWidth="1.600"><path d="M1 1h18l-6.500 8v10L9 16V9z" /></svg>
                <FilterInput>Filter by name</FilterInput>
                <svg width="18" height="18" viewBox="0 0 18 18" stroke={D} strokeWidth="2.400"><path d="M0 1.500h2.200M0 6.500h2.200M0 11.500h2.200M0 16.500h2.200M4 1.500h14M4 6.500h14M4 11.500h14M4 16.500h14" /></svg>
              </FilterRow>
              <ListHead>Instances (13)
                <svg width="23" height="19" viewBox="0 0 24 19" fill="none" stroke="#aaa" strokeWidth="1.500"><path d="M1 7V1h7l2 3h13v13H12" /><path d="M1 12v5h2" /><path d="M7 7v10M2 12h10" stroke="#86a6dc" strokeWidth="2.400" /></svg>
              </ListHead>
              <TreeArea>
                <Tree>
                  <TreeRows>
                    <TreeLine />
                    <Row $level={1}><ChevronBox /><IconBox $w={26}><PartIcon s={19} /></IconBox><IconBox $w={39}>Ba...</IconBox><MateIcon /></Row>
                    <Row $level={1}><ChevronBox><Chevron /></ChevronBox><IconBox $w={26}><ReplicateIcon s={19} /></IconBox>Replicate 1</Row>
                    <Row $level={1}><ChevronBox /><IconBox $w={26}><PartIcon s={19} /></IconBox><IconBox $w={39}>Li...</IconBox><MateIcon /></Row>
                    <Row $level={1}><ChevronBox><Chevron /></ChevronBox><IconBox $w={26}><PartIcon s={19} /></IconBox><IconBox $w={39}>La...</IconBox><MateIcon /></Row>
                    <Row $level={0}><IconBox $w={24}><Chevron down /></IconBox>Mate Features (15)</Row>
                    {features.map(f => (
                      <Row key={f.t} $level={2} $muted>
                        <IconBox $w={f.k === 'f' ? 24 : 23}>{f.open && <Chevron />}</IconBox>
                        <IconBox $w={f.k === 'f' ? 25 : 26} $muted>{kindIcon[f.k]}</IconBox>{f.t}
                      </Row>
                    ))}
                    <Row $level={2} $muted $sel>
                      <IconBox $w={23} /><IconBox $w={26} $muted><RevoluteIcon s={22} /></IconBox><IconBox $w={67}>Revol...</IconBox>
                      <svg width="16" height="20" viewBox="0 0 16 20" fill="#5b7482"><path d="M0 8h16M0 12h16M8 0v4M8 16v4" stroke="#5b7482" strokeWidth="1.700" /><path d="M5 3h6L8 6.500zM5 17h6l-3-3.500z" /></svg>
                    </Row>
                  </TreeRows>
                </Tree>
                <ScrollTrack><Tri /><Thumb /><Tri $down /></ScrollTrack>
              </TreeArea>
            </Panel>
            <Canvas>
              <Scene width="1607" height="736" viewBox="308 92 1607 736"><Stool /><ViewCube /></Scene>
              <ViewMenu>
                <svg width="24" height="24" viewBox="0 0 24 24" stroke={D} strokeWidth="1.500" strokeLinejoin="round"><path d="M1 4l11-3 11 2v15l-11 5L1 19z" fill="#fff" /><path d="M1 4l11 4v15L1 19z" fill="#aaa" stroke="none" /><path d="M12 8l11-5v15l-11 5z" fill="#ccc" stroke="none" /><path d="M1 4l11-3 11 2v15l-11 5L1 19z" fill="none" /></svg>
                <Tri $down $color="#333" $s={5} />
              </ViewMenu>
              <SidePanel>{sideIcons.map((ic, i) => <SideItem key={i}>{ic}</SideItem>)}</SidePanel>
              <Protractor><svg width="25" height="18" viewBox="0 0 25 18" fill="none" stroke={D}><path d="M1 15C0-4 25-4 24 15v2H1z" strokeWidth="1.800" /><path d="M4 14c0-13 17-13 17 0" strokeDasharray="1 1.500" strokeWidth="2" stroke="#777" /><path d="M7.500 13.500c0-8 10-8 10 0zM10.500 13.500c0-4 4-4 4 0" strokeWidth="1.500" /></svg></Protractor>
            </Canvas>
            <Dialog>
              <GhostCorner />
              <DialogHead>Revolute 5
                <Accept><svg width="20" height="16" viewBox="0 0 20 16"><path d="M1.500 8l6 5.500L18.500 1.500" stroke="#fff" strokeWidth="3.600" fill="none" /></svg></Accept>
                <Cancel><svg width="15" height="15" viewBox="0 0 15 15"><path d="M2 2l11 11M13 2L2 13" stroke="#c1303c" strokeWidth="4.400" /></svg></Cancel>
              </DialogHead>
              <SelectRow>Revolute<Tri $down $color="#333" $s={5} /></SelectRow>
              <Selection>
                <SelLabel>Mate connectors<svg width="13" height="17" viewBox="0 0 13 17" fill="#888"><path d="M3 3v12M10 3v11" stroke="#888" strokeWidth="1.500" /><path d="M0 5l3-5 3 5zM7 12l3 5 3-5z" /></svg></SelLabel>
                <SelItem>Mate connector 2 of Base Fra...<CloseX /></SelItem>
                <SelItem $light>Mate connector 3 of Large Fra...<CloseX /></SelItem>
              </Selection>
              <CheckRow $mt={14}><Check />Offset</CheckRow>
              <CheckRow $mt={16}><Check $on><svg width="11" height="9" viewBox="0 0 11 9"><path d="M1.500 4.500l3 3L9.500 1.500" stroke="#fff" strokeWidth="2.400" fill="none" /></svg></Check>Limits</CheckRow>
              <ValueRow $h={40}><ValueIcon $pt={16}><AngleIcon /></ValueIcon><Value>-42.5 deg</Value></ValueRow>
              <ValueRow $h={32}><ValueIcon $pt={9}><AngleIcon flat /></ValueIcon><Value>0 deg</Value></ValueRow>
              <CheckRow $mt={9}><Check />Simulation connection</CheckRow>
              <DialogFoot>
                <FootIcon $up={6}><svg width="24" height="24" viewBox="0 0 24 24" fill={D}><path d="M20 0l3 3L11 15l5 2-16 6L6 8l3 4z" /><path d="M0 9l7-6M7 3H3m4 0v4" stroke="#aaa" strokeWidth="1.500" fill="none" /></svg></FootIcon>
                <FootIcon $ml={7} $up={6}><svg width="24" height="24" viewBox="0 0 24 24" fill="none"><circle cx="12" cy="12" r="9.500" stroke="#999" strokeWidth="1.400" /><path d="M4 8c3-6 14-9 17.500 2" stroke={D} strokeWidth="2.600" /><path d="M1 9l1-7 6 5z" fill={D} /><g fill="#fff" stroke="#777"><circle cx="12" cy="2.500" r="2" /><circle cx="2.500" cy="12.500" r="2" /><circle cx="21.500" cy="12.500" r="2" /><circle cx="12" cy="21.500" r="2" /></g></svg></FootIcon>
                <FootIcon $ml={14} $up={1}><svg width="17" height="16" viewBox="0 0 17 16" fill={D}><path d="M0 0l17 8-17 8z" /></svg></FootIcon>
                <Solve>Solve</Solve>
                <HelpDot>?</HelpDot>
              </DialogFoot>
            </Dialog>
          </Middle>
          <TabBar>
            <AddTab><svg width="19" height="19" viewBox="0 0 19 19" stroke="#666" strokeWidth="3.400"><path d="M9.500 0v19M0 9.500h19" /></svg></AddTab>
            <Tab $active $gap={5}><svg width="23" height="24" viewBox="0 0 23 24" fill="#fff" stroke={D} strokeWidth="1.400" strokeLinejoin="round"><path d="M1 1l16 0 5 5v17H6l-5-5z" /><path d="M1 1h12l4 4v11H5l-4-4z" fill="#999" /><path d="M5 5h12M5 5v11" /></svg>Step Stool Assembly</Tab>
            <Tab $gap={5}><PartStudio />Large Frame Bar</Tab>
            <Tab $gap={5}><PartStudio />Base Frame Bar</Tab>
            <Tab $gap={5}><svg width="23" height="18" viewBox="0 0 23 18" fill="#fff" stroke="#444" strokeWidth="1.400"><path d="M1 1h7l2 3h12v13H1z" /></svg>Part Studios</Tab>
          </TabBar>
        </Work>
      </Body>
    </Page>
  );
}
